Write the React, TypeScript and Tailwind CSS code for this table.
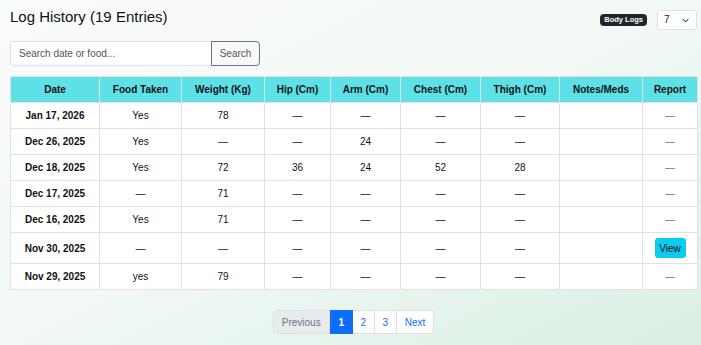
import React from "react";

const rows = [
  { date: "Jan 17, 2026", food: "Yes", weight: "78", hip: "—", arm: "—", chest: "—", thigh: "—", view: false },
  { date: "Dec 26, 2025", food: "Yes", weight: "—", hip: "—", arm: "24", chest: "—", thigh: "—", view: false },
  { date: "Dec 18, 2025", food: "Yes", weight: "72", hip: "36", arm: "24", chest: "52", thigh: "28", view: false },
  { date: "Dec 17, 2025", food: "—", weight: "71", hip: "—", arm: "—", chest: "—", thigh: "—", view: false },
  { date: "Dec 16, 2025", food: "Yes", weight: "71", hip: "—", arm: "—", chest: "—", thigh: "—", view: false },
  { date: "Nov 30, 2025", food: "—", weight: "—", hip: "—", arm: "—", chest: "—", thigh: "—", view: true },
  { date: "Nov 29, 2025", food: "yes", weight: "79", hip: "—", arm: "—", chest: "—", thigh: "—", view: false },
];

const headers = ["Date", "Food Taken", "Weight (Kg)", "Hip (Cm)", "Arm (Cm)", "Chest (Cm)", "Thigh (Cm)", "Notes/Meds", "Report"];
const widths = ["w-[89px]", "w-[82px]", "w-[83px]", "w-[66px]", "w-[70px]", "w-[80px]", "w-[79px]", "w-[83px]", "w-[55px]"];

export default function App() {
  return (
    <div
      className="min-h-screen w-full bg-linear-to-br from-[#fbfcfc] via-[#f1f8f5] to-[#daf0e3] pl-[10px] pr-[4px] pt-[7px] text-[#111]"
      style={{ fontFamily: '"Liberation Sans", Arial, sans-serif' }}
    >
      <div className="flex items-start justify-between">
        <h1 className="text-[15px] leading-[20px] font-normal text-[#111]">Log History (19 Entries)</h1>
        <div className="flex items-center gap-[10px] pt-[3px]">
          <span className="rounded-[4px] bg-[#212529] px-[4px] text-[7.5px] leading-[12px] font-bold text-white">Body Logs</span>
          <div className="flex h-[20px] w-[40px] items-center justify-between rounded-[3px] border border-[#dee2e6] bg-white pl-[6px] pr-[7px] text-[10px] text-[#212529]">
            <span className="-mt-[2px]">7</span>
            <svg width="7" height="5" viewBox="0 0 8 5" fill="none" className="mt-[1px]">
              <path d="M1 1l3 3 3-3" stroke="#555" strokeWidth="1.2" strokeLinecap="round" strokeLinejoin="round" />
            </svg>
          </div>
        </div>
      </div>

      <div className="mt-[11px] flex h-[25px] w-[250px]">
        <div className="flex flex-1 items-center rounded-l-[4px] border border-r-0 border-[#dee2e6] bg-white pl-[8px] text-[10px] text-[#555]">
          Search date or food...
        </div>
        <button className="flex w-[49px] items-center justify-center rounded-r-[4px] border border-[#6c757d] bg-[#f8f9fa] text-[10px] text-[#555]">
          Search
        </button>
      </div>

      <table className="mt-[10px] w-[687px] table-fixed border-collapse bg-white text-[10px]">
        <thead>
          <tr className="h-[26px] bg-[#5ee1e6]">
            {headers.map((h, i) => (
              <th key={h} className={`${widths[i]} border border-[#dee2e6] p-0 text-center align-middle font-bold text-[#111]`}>
                {h}
              </th>
            ))}
          </tr>
        </thead>
        <tbody>
          {rows.map((r) => (
            <tr key={r.date} className={r.view ? "h-[31px]" : "h-[26px]"}>
              <td className="border border-[#dee2e6] p-0 text-center align-middle font-bold">{r.date}</td>
              <td className="border border-[#dee2e6] p-0 text-center align-middle">{r.food}</td>
              <td className="border border-[#dee2e6] p-0 text-center align-middle">{r.weight}</td>
              <td className="border border-[#dee2e6] p-0 text-center align-middle">{r.hip}</td>
              <td className="border border-[#dee2e6] p-0 text-center align-middle">{r.arm}</td>
              <td className="border border-[#dee2e6] p-0 text-center align-middle">{r.chest}</td>
              <td className="border border-[#dee2e6] p-0 text-center align-middle">{r.thigh}</td>
              <td className="border border-[#dee2e6] p-0 text-center align-middle"></td>
              <td className="border border-[#dee2e6] p-0 text-center align-middle text-[#6c757d]">
                {r.view ? (
                  <button className="inline-flex h-[20px] w-[31px] items-center justify-center rounded-[3px] bg-[#0dcaf0] text-[10px] text-[#111]">
                    View
                  </button>
                ) : (
                  "—"
                )}
              </td>
            </tr>
          ))}
        </tbody>
      </table>

      <div className="mt-[20px] flex w-[687px] justify-center">
        <div className="flex h-[24px] text-[10px]">
          <span className="flex items-center rounded-l-[4px] border border-[#dee2e6] bg-[#e9ecef] px-[8px] text-[#6c757d]">Previous</span>
          <span className="flex w-[23px] items-center justify-center border border-[#0d6efd] bg-[#0d6efd] font-bold text-white">1</span>
          <span className="flex w-[22px] items-center justify-center border border-l-0 border-[#dee2e6] bg-white text-[#0d6efd]">2</span>
          <span className="flex w-[22px] items-center justify-center border border-l-0 border-[#dee2e6] bg-white text-[#0d6efd]">3</span>
          <span className="flex items-center rounded-r-[4px] border border-l-0 border-[#dee2e6] bg-white px-[8px] text-[#0d6efd]">Next</span>
        </div>
      </div>
    </div>
  );
}
